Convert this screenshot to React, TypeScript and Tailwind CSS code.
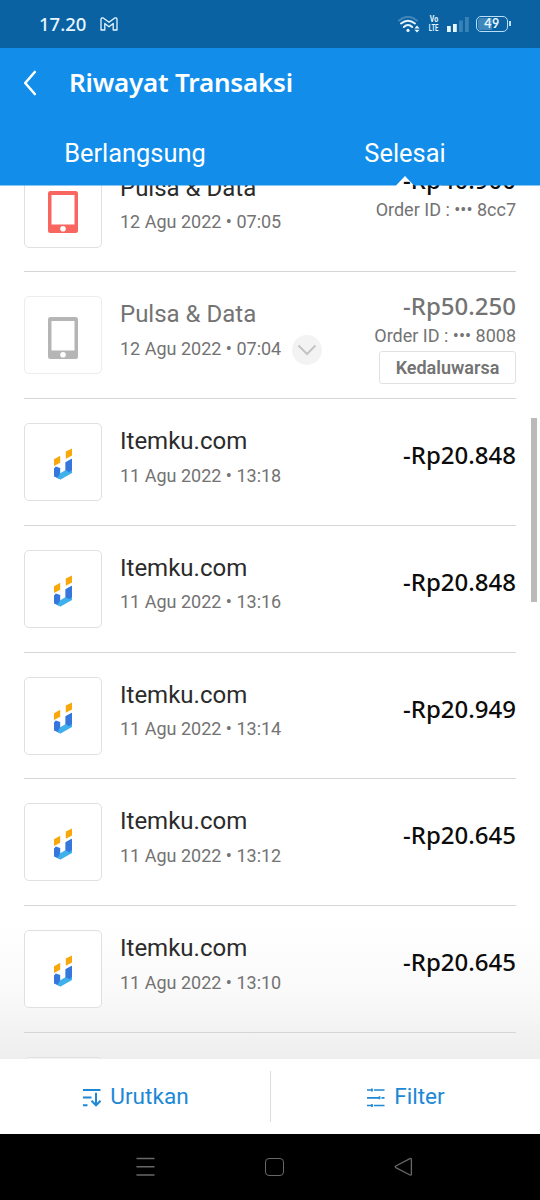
import clsx from "clsx";

interface ITransaction {
  title: string;
  date: string;
  amount: string;
  icon: "phone" | "itemku";
  orderId?: string;
  status?: string;
  expired?: boolean;
}

const transactions: ITransaction[] = [
  { title: "Pulsa & Data", date: "12 Agu 2022 • 07:05", amount: "-Rp40.900", icon: "phone", orderId: "8cc7" },
  {
    title: "Pulsa & Data",
    date: "12 Agu 2022 • 07:04",
    amount: "-Rp50.250",
    icon: "phone",
    orderId: "8008",
    status: "Kedaluwarsa",
    expired: true,
  },
  { title: "Itemku.com", date: "11 Agu 2022 • 13:18", amount: "-Rp20.848", icon: "itemku" },
  { title: "Itemku.com", date: "11 Agu 2022 • 13:16", amount: "-Rp20.848", icon: "itemku" },
  { title: "Itemku.com", date: "11 Agu 2022 • 13:14", amount: "-Rp20.949", icon: "itemku" },
  { title: "Itemku.com", date: "11 Agu 2022 • 13:12", amount: "-Rp20.645", icon: "itemku" },
  { title: "Itemku.com", date: "11 Agu 2022 • 13:10", amount: "-Rp20.645", icon: "itemku" },
];

const PhoneIcon = ({ className }: { className?: string }) => (
  <svg width="30" height="42" viewBox="0 0 30 42" className={className}>
    <path
      fill="currentColor"
      fillRule="evenodd"
      d="M2.5 0h25a2.5 2.5 0 0 1 2.5 2.5v37a2.5 2.5 0 0 1-2.5 2.5h-25A2.5 2.5 0 0 1 0 39.5v-37A2.5 2.5 0 0 1 2.5 0ZM3.5 4v29.5h23V4ZM15 35a2.8 2.8 0 1 0 0 5.6a2.8 2.8 0 1 0 0-5.6Z"
    />
  </svg>
);

const ItemkuIcon = () => (
  <svg width="18" height="32" viewBox="0 0 18 32">
    <path fill="#f9a80c" d="M0 11.2 6.2 7.8V14.8L0 18ZM11.8 3.6 18 .4V7.6L11.8 10.8Z" />
    <path fill="#3577dc" d="M0 20.4 1.8 18.6 6.2 20V26L6.6 31.6 0 28.5ZM11.6 14.2 18 10.8V25L11.6 23Z" />
    <path fill="#3fb0ec" d="M6.2 25.2 11.8 22 18 20.5V25L6.6 31.6 3.5 30.1Z" />
    <path fill="#3577dc" d="M11.6 14.2 18 10.8V21.8L15.5 24.2 11.6 22.2Z" />
  </svg>
);

const StatusBar = () => (
  <div className="flex h-12 shrink-0 items-center justify-between bg-[#0a62a2] pr-8 pl-[39px] text-[#e6f6ff]">
    <div className="flex items-center gap-[14px]">
      <span className="font-['Noto_Sans',sans-serif] text-[18.5px] leading-6 font-medium">17.20</span>
      <svg width="18" height="14" viewBox="0 0 18 14" fill="none" stroke="currentColor" strokeWidth="1.3" strokeLinejoin="round">
        <path d="M1 2.2Q1.6.2 3.6 1.2L9 5.3l5.4-4.1Q16.4.2 17 2.2V13h-3.8V6.5L9 9.8 4.8 6.5V13H1Z" />
      </svg>
    </div>
    <div className="flex items-center">
      <svg width="22" height="17" viewBox="0 0 22 17" fill="none" stroke="currentColor" strokeWidth="1.9" strokeLinecap="round">
        <path d="M1 4.6Q10 -3 19 4.6" opacity=".25" />
        <path d="M3 7.5Q10 1.8 17 7.5M5.8 11Q10 7.2 14.2 11" />
        <circle cx="10" cy="14.4" r="1.6" fill="currentColor" stroke="none" />
        <path fill="currentColor" stroke="none" d="m19 9.5 2.6 3h-5.2Zm0 7 2.6-2.8h-5.2Z" />
      </svg>
      <div className="ml-2 flex h-[18px] w-3 flex-col items-center font-['Roboto',sans-serif] text-[7px] leading-[9px] font-bold">
        <span className="scale-y-140">Vo</span>
        <span className="scale-x-85 scale-y-140">LTE</span>
      </div>
      <svg width="22" height="16" viewBox="0 0 22 16" fill="currentColor" className="ml-[7px]">
        <path d="M0 10h3.8v6H0zM6 8h3.8v8H6z" />
        <path opacity=".22" d="M12 4.5h3.8V16H12zM18 1h3.8v15H18z" />
      </svg>
      <div className="relative ml-[7px] flex h-4 w-8 items-center justify-center rounded-[5px] border-[1.5px] border-[#b9def5] bg-[linear-gradient(90deg,#3d87bd_49%,transparent_49%)] bg-clip-content p-px">
        <span className="font-['Lato',sans-serif] text-[12.5px] leading-3 font-bold tracking-[.5px]">49</span>
        <span className="absolute top-[4px] -right-[3.5px] h-[5px] w-[1.5px] bg-[#b9def5]" />
      </div>
    </div>
  </div>
);

const Header = () => (
  <header className="relative z-10 h-[137.5px] shrink-0 bg-[#128eea] text-white [clip-path:polygon(0_0,100%_0,100%_100%,414px_100%,405px_128px,396px_100%,0_100%)]">
    <div className="flex h-[70px] items-center pl-[23px]">
      <svg width="14" height="26" viewBox="0 0 14 26" fill="none" stroke="currentColor" strokeWidth="2.6" strokeLinecap="round" strokeLinejoin="round">
        <path d="M11.8 2 2.2 13l9.6 11" />
      </svg>
      <h1 className="-mt-px ml-8 font-['Noto_Sans',sans-serif] text-[26px] font-semibold tracking-[-0.2px] whitespace-nowrap">
        Riwayat Transaksi
      </h1>
    </div>
    <div className="grid grid-cols-2 pt-[17px] text-center font-['Roboto',sans-serif] text-[25.4px] leading-9">
      <span>Berlangsung</span>
      <span>Selesai</span>
    </div>
  </header>
);

const TransactionRow = ({ title, date, amount, icon, orderId, status, expired }: ITransaction) => (
  <div className="flex h-[126.8px] shrink-0 border-b border-[#d6d6d6] pt-6 font-['Roboto',sans-serif]">
    <div
      className={clsx(
        "flex size-[78px] shrink-0 items-center justify-center rounded-[5px] border-[1.5px] bg-white",
        expired ? "border-[#ececec]" : "border-[#e0e0e0]"
      )}
    >
      {icon === "phone" ? (
        <PhoneIcon className={clsx("mt-1.5", expired ? "text-[#b5b5b5]" : "text-[#f9655f]")} />
      ) : (
        <div className="mt-1">
          <ItemkuIcon />
        </div>
      )}
    </div>
    <div className="ml-[18px] whitespace-nowrap">
      <p className={clsx("text-[24px] leading-9", expired ? "text-[#737373]" : "text-[#2b2b2b]")}>{title}</p>
      <div className="flex h-8 items-center">
        <p className="text-[18px] text-[#737373]">{date}</p>
        {expired && (
          <span className="mt-1 ml-[11px] flex size-[30px] items-center justify-center rounded-full bg-[#f3f3f3]">
            <svg width="20" height="12" viewBox="0 0 20 12" fill="none" stroke="#c4c4c4" strokeWidth="2">
              <path d="m1.5 1.5 8.5 8.5 8.5-8.5" />
            </svg>
          </span>
        )}
      </div>
    </div>
    <div className={clsx("ml-auto flex flex-col items-end whitespace-nowrap", orderId ? "-mt-[6px]" : "mt-4")}>
      <p
        className={clsx(
          "font-['Noto_Sans',sans-serif] text-[24px] leading-8 font-medium",
          expired ? "text-[#737373]" : "text-[#0c0c0c]"
        )}
      >
        {amount}
      </p>
      {orderId && <p className="text-[18px] leading-7 text-[#737373]">Order ID : ••• {orderId}</p>}
      {status && (
        <span className="mt-px flex h-[33px] w-[137px] items-center justify-center rounded-[3px] border-[1.5px] border-[#e2e2e2] bg-white text-[18px] font-semibold text-[#737373]">
          {status}
        </span>
      )}
    </div>
  </div>
);

const ActionBar = () => (
  <div className="relative z-10 flex h-[75px] shrink-0 items-center bg-white font-['Roboto',sans-serif] text-[22.6px] text-[#1c88d6]">
    <div className="flex flex-1 items-center justify-center gap-[9px] pl-[2px]">
      <svg width="18" height="20" viewBox="0 0 18 20" fill="none" stroke="currentColor" strokeWidth="2" className="mt-[3px]">
        <path d="M0 1.9h17.5M0 9.5h8.5M0 17.3h4.5M13 4.8v12M8.5 12.8l4.5 4.5 4.5-4.5" />
      </svg>
      <span>Urutkan</span>
    </div>
    <span className="h-[51px] w-px bg-[#dcdcdc]" />
    <div className="flex flex-1 items-center justify-center gap-[9px] pl-px">
      <svg width="18" height="20" viewBox="0 0 18 20" fill="none" stroke="currentColor" strokeWidth="1.7" className="mt-[3px]">
        <path d="M0 2h5M7 2h10.5M0 9.8h12M14.5 9.8h3M0 17.5h5M7 17.5h10.5M5 .5v3M12.5 8.3v3M5 16v3" />
      </svg>
      <span>Filter</span>
    </div>
  </div>
);

const NavigationBar = () => (
  <div className="flex h-[66px] shrink-0 items-center bg-black pl-[136px] text-[#686868]">
    <svg width="19" height="20" viewBox="0 0 19 20" stroke="currentColor" strokeWidth="1.4">
      <path d="M.5 1.5h18M.5 9.7h18M.5 18h18" />
    </svg>
    <span className="ml-[110px] h-[18px] w-[19px] rounded-[4px] border-[1.3px] border-current" />
    <svg width="19" height="20" viewBox="0 0 19 20" fill="none" stroke="currentColor" strokeWidth="1.3" strokeLinejoin="round" className="ml-[110px]">
      <path d="M16 1.6 1.8 9q-1.2.8 0 1.6L16 18q1.4.5 1.4-1V2.6q0-1.6-1.4-1Z" />
    </svg>
  </div>
);

const App = () => {
  return (
    <div className="flex h-[1200px] w-[540px] flex-col overflow-hidden bg-white">
      <StatusBar />
      <Header />
      <main className="relative -mt-10 flex min-h-0 flex-1 flex-col overflow-hidden px-6">
        <div className="absolute inset-x-0 bottom-0 h-[140px] bg-linear-to-b from-white via-[#fafafa] to-[#eeeeee]" />
        <div className="relative flex flex-col">
          {transactions.map((item) => (
            <TransactionRow key={item.date} {...item} />
          ))}
          <div className="mt-6 h-[78px] w-[78px] rounded-[5px] border-[1.5px] border-[#e0e0e0] bg-[#f4f4f4]" />
        </div>
        <div className="absolute top-[272.5px] right-[3px] h-[184px] w-[6px] bg-[#bababa]" />
      </main>
      <ActionBar />
      <NavigationBar />
    </div>
  );
};

export default App;
